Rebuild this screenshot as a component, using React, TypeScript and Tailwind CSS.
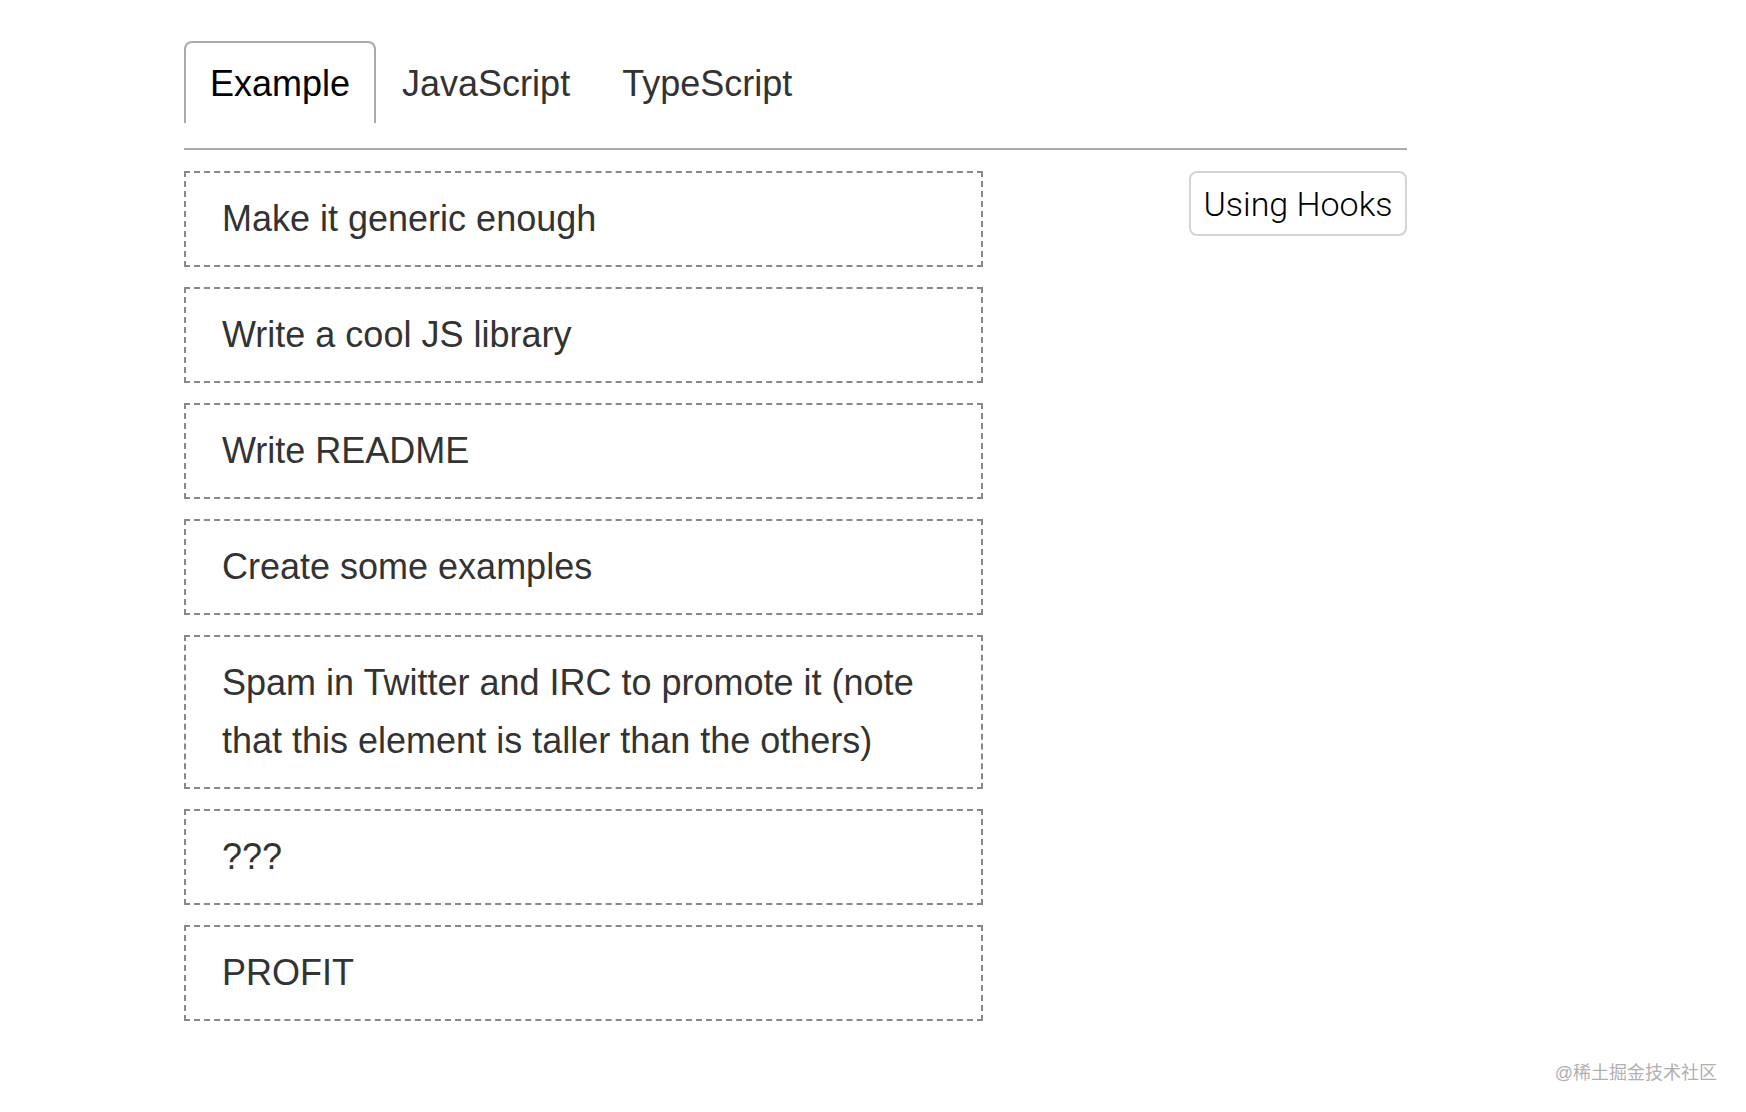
import React from "react";

const items = [
  "Make it generic enough",
  "Write a cool JS library",
  "Write README",
  "Create some examples",
  "Spam in Twitter and IRC to promote it (note that this element is taller than the others)",
  "???",
  "PROFIT",
];

export default function App() {
  return (
    <div className="relative min-h-[1112px] w-full bg-white font-['Liberation_Sans',Arial,sans-serif]">
      <div className="pl-[184px] pt-[41px] w-[1407px]">
        <div className="flex h-[82px] items-stretch">
          <div className="flex items-center pt-[2px] px-6 border-2 border-b-0 border-[#aaaaaa] rounded-t-[8px] text-[36px] text-black leading-none">
            Example
          </div>
          <div className="flex items-center pt-[2px] px-6 border-2 border-b-0 border-transparent text-[36px] text-[#333333] leading-none">
            JavaScript
          </div>
          <div className="flex items-center pt-[2px] px-6 border-2 border-b-0 border-transparent text-[36px] text-[#333333] leading-none">
            TypeScript
          </div>
        </div>
        <div className="mt-[25px] h-[2px] w-[1223px] bg-[#aaaaaa]" />
        <div className="mt-[21px] flex w-[1223px] justify-between items-start">
          <div className="flex w-[799px] flex-col gap-5">
            {items.map((t) => (
              <div
                key={t}
                className="border-2 border-dashed border-[#888888] pl-9 pr-9 py-[17px] text-[36px] leading-[58px] text-[#333333]"
              >
                {t}
              </div>
            ))}
          </div>
          <button className="h-[65px] w-[218px] rounded-[8px] border-2 border-[#d4d4d4] bg-white font-['Roboto',sans-serif] font-light text-[34px] text-black leading-none">
            Using Hooks
          </button>
        </div>
      </div>
      <div className="absolute right-[29px] top-[1060px] text-[18px] text-[#b0b0b0] font-['Liberation_Sans','Noto_Sans_CJK_SC',sans-serif]">
        @稀土掘金技术社区
      </div>
    </div>
  );
}
